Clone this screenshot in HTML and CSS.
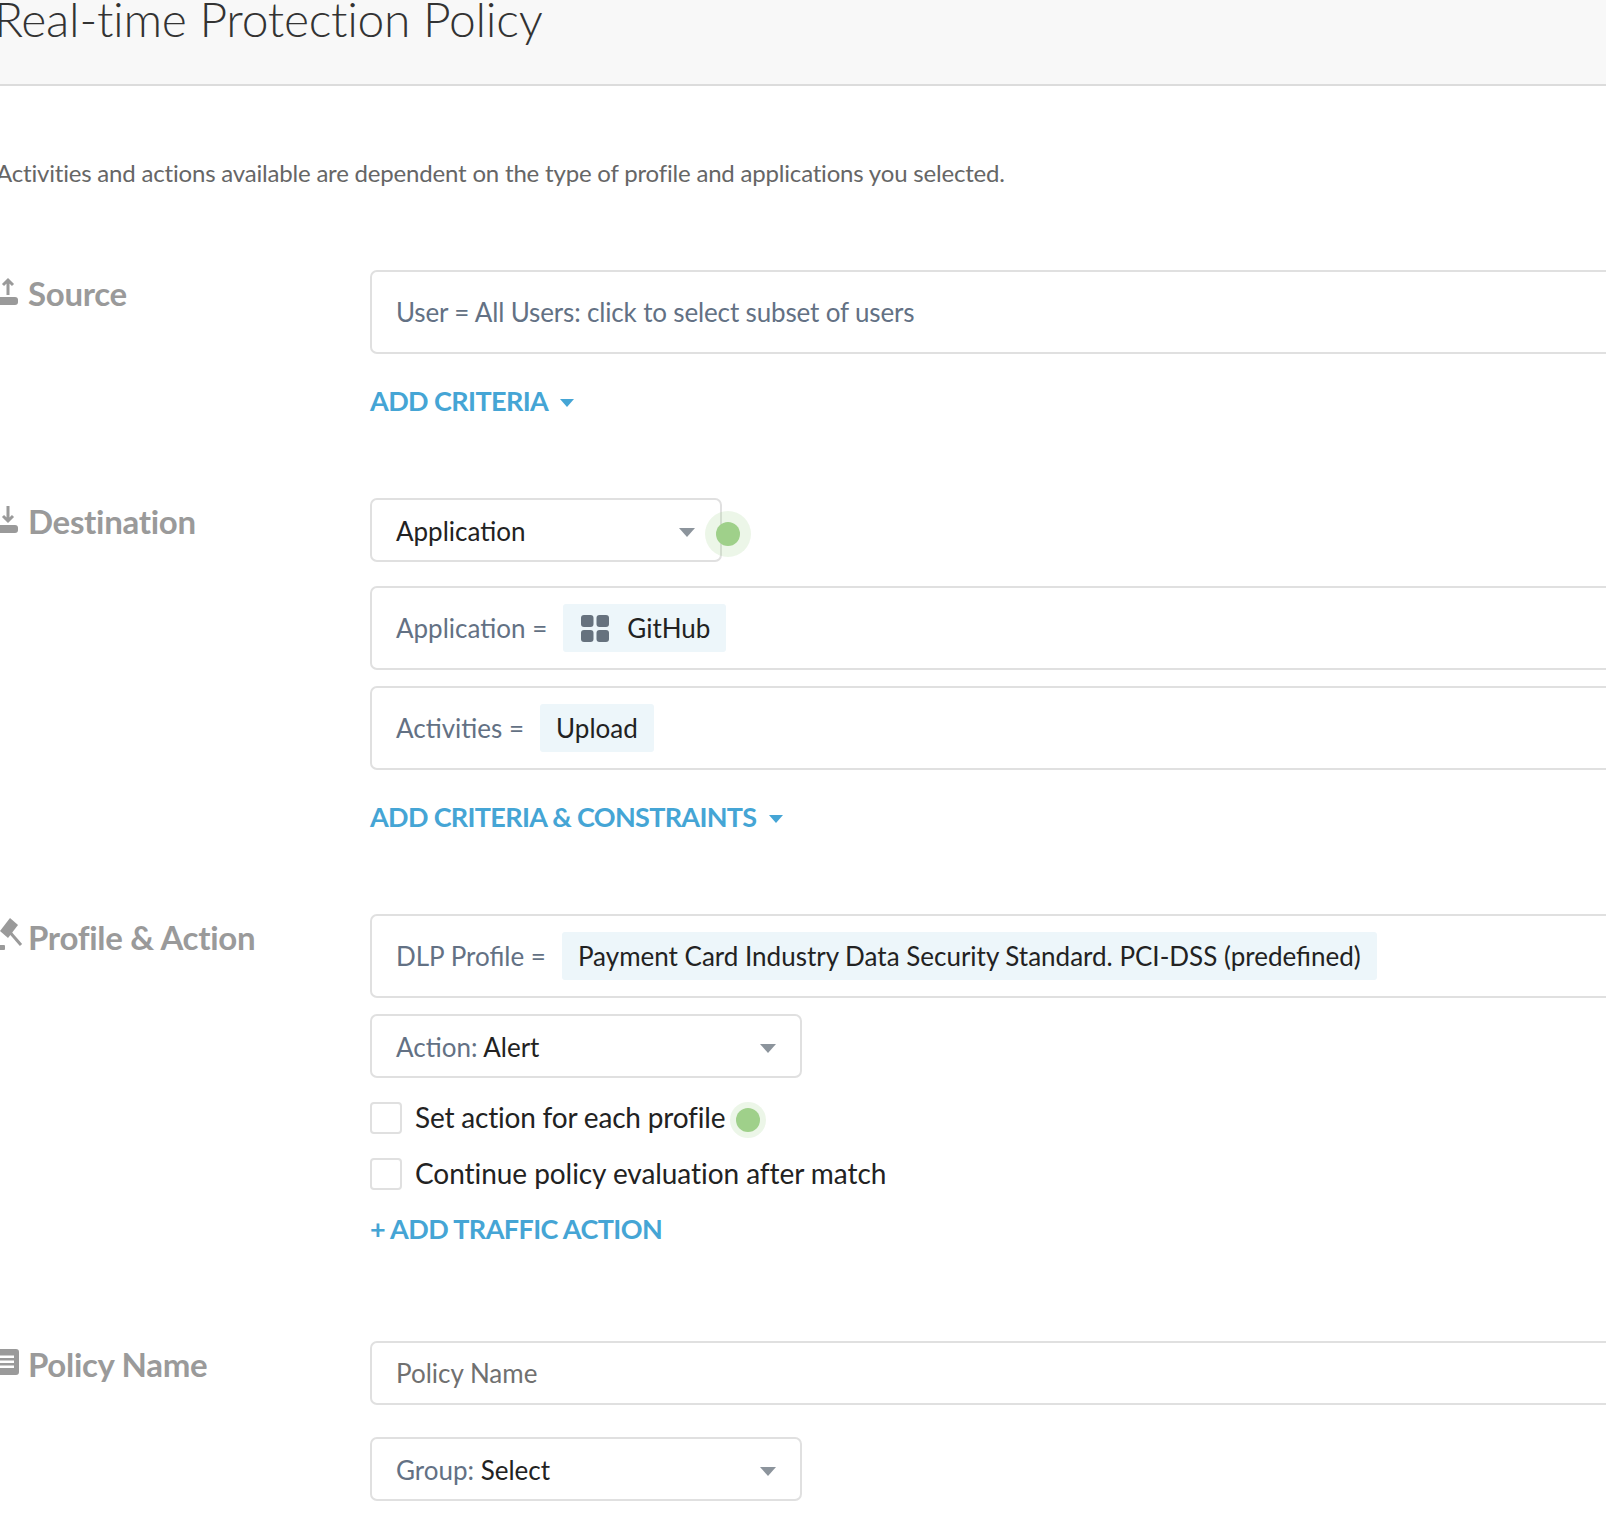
FILE: index.html
```html
<!DOCTYPE html>
<html lang="en">
<head>
  <meta charset="UTF-8">
  <title>Real-time Protection Policy</title>
  <link rel="stylesheet" href="styles.css">
</head>
<body>

<header class="page-head">
  <h1>Real-time Protection Policy</h1>
</header>

<p class="intro">Activities and actions available are dependent on the type of profile and applications you selected.</p>

<section class="row row-source">
  <h2 class="row-title">
    <svg class="row-icon" viewBox="0 0 20 30"><path class="arrow" d="M8 17V2M3 7l5-5 5 5"/><rect x="-4" y="19" width="22" height="8" rx="3"/></svg>
    Source
  </h2>
  <div class="row-body">
    <div class="field field-tall"><span class="muted muted-tight">User = All Users: click to select subset of users</span></div>
    <a class="link link-first">ADD CRITERIA <span class="caret caret-blue"></span></a>
  </div>
</section>

<section class="row row-dest">
  <h2 class="row-title">
    <svg class="row-icon" viewBox="0 0 20 30"><path class="arrow" d="M8 0v15M3 10l5 5 5-5"/><rect x="-4" y="19" width="22" height="8" rx="3"/></svg>
    Destination
  </h2>
  <div class="row-body">
    <div class="hint-wrap">
      <div class="select select-app"><span>Application</span><span class="caret"></span></div>
      <span class="dot dot-over"></span>
    </div>
    <div class="field field-tall field-chip"><span class="muted">Application =</span>
      <span class="chip chip-app">
        <svg class="grid-icon" viewBox="0 0 28 27"><rect width="12.500" height="12" rx="3"/><rect x="15.500" width="12.500" height="12" rx="3"/><rect y="15" width="12.500" height="12" rx="3"/><rect x="15.500" y="15" width="12.500" height="12" rx="3"/></svg>
        GitHub
      </span>
    </div>
    <div class="field field-tall field-chip"><span class="muted">Activities =</span> <span class="chip">Upload</span></div>
    <a class="link link-second">ADD CRITERIA &amp; CONSTRAINTS <span class="caret caret-blue"></span></a>
  </div>
</section>

<section class="row row-profile">
  <h2 class="row-title">
    <svg class="row-icon" viewBox="0 0 20 30"><path d="M10-4l8 7-10 13-8-7z"/><path class="arrow" d="M8 8l13 15"/><rect x="-3" y="23" width="8" height="5" rx="1"/></svg>
    Profile &amp; Action
  </h2>
  <div class="row-body">
    <div class="field field-tall field-chip"><span class="muted">DLP Profile =</span> <span class="chip">Payment Card Industry Data Security Standard. PCI-DSS (predefined)</span></div>
    <div class="select select-wide"><span><span class="muted">Action:</span> Alert</span><span class="caret"></span></div>
    <label class="check check-tight"><span class="box"></span><span class="check-text">Set action for each profile</span><span class="dot dot-inline"></span></label>
    <label class="check"><span class="box"></span><span class="check-text">Continue policy evaluation after match</span></label>
    <a class="link link-third">+ ADD TRAFFIC ACTION</a>
  </div>
</section>

<section class="row row-name">
  <h2 class="row-title">
    <svg class="row-icon" viewBox="0 0 20 30"><path fill-rule="evenodd" d="M-3 0h19a3 3 0 0 1 3 3v20a3 3 0 0 1-3 3H-3zM0 6.500V9h14V6.500zM0 11.500V14h14v-2.500zM0 16.500V19h14v-2.500z"/></svg>
    Policy Name
  </h2>
  <div class="row-body">
    <div class="field field-name"><span class="placeholder">Policy Name</span></div>
    <div class="select select-wide select-group"><span><span class="muted">Group:</span> Select</span><span class="caret"></span></div>
  </div>
</section>

</body>
</html>
```

FILE: styles.css
```css
html, body {
  margin: 0;
  padding: 0;
  height: 1516px;
  overflow: hidden;
  background: #fff;
}
body {
  font-family: Lato, "Liberation Sans", sans-serif;
  font-size: 26px;
  color: #222;
  width: 1606px;
}
.page-head {
  height: 84px;
  background: #f8f8f8;
  border-bottom: 2px solid #dcdcdc;
  overflow: hidden;
}
.page-head h1 {
  margin: -16px 0 0 -6px;
  font-size: 48px;
  line-height: 70px;
  font-weight: 300;
  letter-spacing: -0.27px;
  color: #333;
}
.intro {
  margin: 72px 0 0 -4px;
  font-size: 24px;
  line-height: 30px;
  letter-spacing: -0.19px;
  color: #666;
}
.row {
  display: flex;
}
.row-title {
  width: 370px;
  flex: none;
  margin: 1px 0 0;
  font-size: 33px;
  line-height: 44px;
  font-weight: 700;
  letter-spacing: -0.3px;
  color: #9a9a9a;
  display: flex;
  align-items: center;
  align-self: flex-start;
  gap: 8px;
}
.row-icon {
  width: 20px;
  height: 30px;
  fill: #9a9a9a;
  flex: none;
  overflow: visible;
}
.row-icon .arrow {
  fill: none;
  stroke: #9a9a9a;
  stroke-width: 3;
}
.row-body {
  flex: 1;
  min-width: 0;
  display: flex;
  flex-direction: column;
  align-items: flex-start;
}
.row-source { margin-top: 82px; }
.row-dest { margin-top: 80px; }
.row-profile { margin-top: 80px; }
.row-name { margin-top: 95px; }
.field {
  box-sizing: border-box;
  width: 1300px;
  border: 2px solid #e0e0e0;
  border-radius: 7px;
  display: flex;
  align-items: center;
  padding-left: 24px;
  gap: 16px;
}
.field-tall { height: 84px; }
.field + .field { margin-top: 16px; }
.field-name { height: 64px; }
.muted { color: #637184; }
.muted-tight { letter-spacing: -0.15px; }
.placeholder { color: #707070; }
.chip {
  background: #edf6fa;
  border-radius: 3px;
  height: 48px;
  padding: 0 16px;
  display: flex;
  align-items: center;
  color: #222;
}
.chip-app { padding-left: 18px; gap: 18px; }
.grid-icon { width: 28px; height: 27px; fill: #66727e; }
.select {
  box-sizing: border-box;
  height: 64px;
  border: 2px solid #e0e0e0;
  border-radius: 7px;
  display: flex;
  align-items: center;
  justify-content: space-between;
  padding: 2px 25px 0 24px;
  background: #fff;
}
.select .caret { margin-top: 2px; }
.select-app { width: 352px; }
.select-wide { width: 432px; padding-right: 24px; }
.select-group { margin-top: 32px; }
.caret {
  width: 0;
  height: 0;
  border-left: 8px solid transparent;
  border-right: 8px solid transparent;
  border-top: 9px solid #8c949c;
}
.caret-blue {
  display: inline-block;
  margin-left: 7px;
  vertical-align: 4px;
  border-left-width: 7px;
  border-right-width: 7px;
  border-top: 8px solid #45a5d5;
}
.link {
  color: #45a5d5;
  font-weight: 700;
  font-size: 27px;
  line-height: 34px;
  letter-spacing: -0.6px;
}
.link-first { margin-top: 30px; }
.link-second { margin-top: 30px; letter-spacing: -0.68px; }
.link-third { margin-top: 22px; }
.hint-wrap {
  position: relative;
  margin-bottom: 24px;
}
.dot {
  display: inline-block;
  width: 24px;
  height: 24px;
  border-radius: 50%;
  background: #9fd08a;
  box-shadow: 0 0 0 11px rgba(159, 208, 138, 0.2);
}
.dot-over {
  position: absolute;
  left: 346px;
  top: 24px;
}
.dot-inline {
  margin: 4px 0 0 11px;
  box-shadow: 0 0 0 6px rgba(159, 208, 138, 0.2);
}
.check {
  display: flex;
  align-items: center;
  height: 32px;
  margin-top: 24px;
  font-size: 28px;
  letter-spacing: -0.06px;
}
.check-tight { letter-spacing: -0.19px; }
.check-text { margin-top: -3px; }
.box {
  box-sizing: border-box;
  width: 32px;
  height: 32px;
  border: 2px solid #e0e0e0;
  border-radius: 4px;
  margin-right: 13px;
  background: #fff;
}
.row-profile .field { margin-bottom: 16px; }
```
